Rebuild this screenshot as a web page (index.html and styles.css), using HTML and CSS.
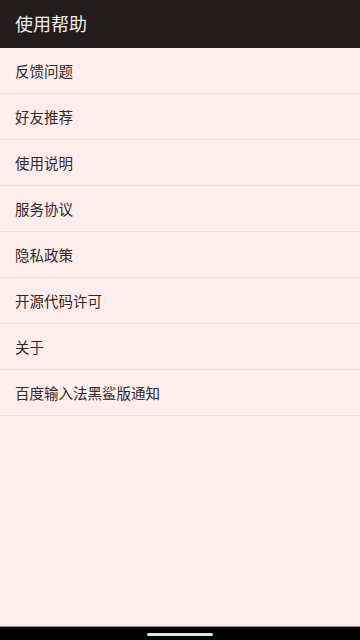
FILE: index.html
```html
<!DOCTYPE html>
<html lang="zh">
<head>
<meta charset="utf-8">
<meta name="viewport" content="width=device-width, initial-scale=1">
<title>使用帮助</title>
<link rel="stylesheet" href="styles.css">
</head>
<body>
<div class="screen">
  <header class="appbar">
    <h1 class="title">使用帮助</h1>
  </header>
  <main class="content">
    <ul class="menu">
      <li class="item">反馈问题</li>
      <li class="item">好友推荐</li>
      <li class="item">使用说明</li>
      <li class="item">服务协议</li>
      <li class="item">隐私政策</li>
      <li class="item">开源代码许可</li>
      <li class="item">关于</li>
      <li class="item">百度输入法黑鲨版通知</li>
    </ul>
  </main>
  <footer class="navbar">
    <span class="pill"></span>
  </footer>
</div>
</body>
</html>
```
FILE: styles.css
```css
html, body {
  margin: 0;
  padding: 0;
}
body {
  font-family: "Noto Sans CJK SC", "Noto Sans", sans-serif;
  background: #fdeeed;
}
.screen {
  width: 360px;
  height: 640px;
  display: flex;
  flex-direction: column;
  background: #fdeeed;
}
.appbar {
  height: 48px;
  flex: 0 0 48px;
  background: #221c1c;
  display: flex;
  align-items: center;
  padding: 0 15px;
  box-sizing: border-box;
}
.title {
  margin: 0;
  font-size: 18px;
  font-weight: 400;
  color: #f4f0f0;
  line-height: 1;
  padding-bottom: 2px;
}
.content {
  flex: 1 1 auto;
}
.menu {
  list-style: none;
  margin: 0;
  padding: 0;
}
.item {
  height: 46px;
  box-sizing: border-box;
  border-bottom: 1px solid #eedcdb;
  display: flex;
  align-items: center;
  padding: 0 15px;
  font-size: 14.5px;
  color: #2e2828;
}
.navbar {
  flex: 0 0 14px;
  height: 14px;
  background: #000;
  border-top: 1px solid #8a8484;
  box-sizing: border-box;
  display: flex;
  justify-content: center;
  align-items: center;
}
.pill {
  width: 66px;
  height: 3px;
  border-radius: 2px;
  background: #e2e2e2;
  margin-top: 2px;
}
```
